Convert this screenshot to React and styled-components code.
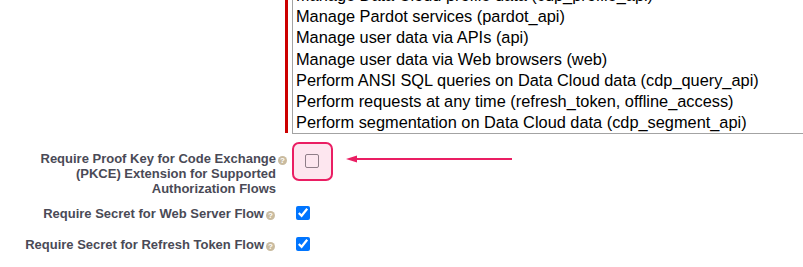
import React from "react";
import styled, { createGlobalStyle } from "styled-components";

const GlobalStyle = createGlobalStyle`
    html, body {
        margin: 0;
        padding: 0;
        background: #fff;
        overflow: hidden;
    }
    body {
        font-family: "Liberation Sans", Arial, sans-serif;
    }
`;

const scopes = [
    "Manage Data Cloud profile data (cdp_profile_api)",
    "Manage Pardot services (pardot_api)",
    "Manage user data via APIs (api)",
    "Manage user data via Web browsers (web)",
    "Perform ANSI SQL queries on Data Cloud data (cdp_query_api)",
    "Perform requests at any time (refresh_token, offline_access)",
    "Perform segmentation on Data Cloud data (cdp_segment_api)",
];

const Page = styled.div`
    width: 803px;
    overflow: hidden;
`;

const Row = styled.div`
    display: flex;
    align-items: ${(p) => p.$align || "flex-start"};
    height: ${(p) => (p.$h ? `${p.$h}px` : "auto")};
    margin-top: ${(p) => p.$top || 0}px;
`;

const LabelCell = styled.div`
    flex: 0 0 ${(p) => p.$width}px;
    box-sizing: border-box;
    padding: ${(p) => p.$padTop || 0}px ${(p) => p.$padRight || 0}px 0 0;
    text-align: right;
    font-size: 13px;
    line-height: 15px;
    font-weight: bold;
    color: #4a4a56;
`;

const HelpOrb = styled.span`
    display: inline-block;
    width: 9px;
    height: 9px;
    margin-left: 2px;
    margin-right: ${(p) => (p.$hang ? "-11px" : "0")};
    border-radius: 50%;
    background: #c9bb9f;
    color: #fff;
    font-size: 8px;
    line-height: 9px;
    text-align: center;
    vertical-align: 0px;
`;

const RequiredInput = styled.div`
    display: flex;
    gap: 4px;
    flex: 1;
`;

const RequiredBar = styled.div`
    flex: 0 0 3px;
    background: #c00;
    margin: 1px 0;
`;

const ListBox = styled.div`
    flex: 0 0 600px;
    border: 1px solid #a3a3a3;
    padding: 0 0 0 3px;
    font-size: 16.35px;
    line-height: 21.2px;
    color: #000;
    white-space: nowrap;
`;

const Option = styled.div``;

const DataCell = styled.div`
    display: flex;
    align-items: flex-start;
`;

const Highlight = styled.div`
    box-sizing: border-box;
    width: 41px;
    height: 39px;
    padding: 10px 0 0 11px;
    border: 2px solid #ea1e63;
    border-radius: 7px;
    background: #fde6ef;
`;

const PlainBox = styled.input.attrs({ type: "checkbox" })`
    appearance: none;
    display: block;
    box-sizing: border-box;
    width: 14px;
    height: 14px;
    margin: 0;
    border: 1px solid #8f7d88;
    border-radius: 2px;
    background: transparent;
`;

const CheckBox = styled.input.attrs({ type: "checkbox" })`
    width: 14px;
    height: 14px;
    margin: 3px 3px 3px 4px;
    accent-color: #0075ff;
`;

const Arrow = styled.svg`
    margin: 12px 0 0 13px;
    flex: 0 0 auto;
`;

const App = () => {
    return (
        <Page>
            <GlobalStyle />
            <Row $top={-16}>
                <LabelCell $width={285} />
                <RequiredInput>
                    <RequiredBar />
                    <ListBox>
                        {scopes.map((s) => (
                            <Option key={s}>{s}</Option>
                        ))}
                    </ListBox>
                </RequiredInput>
            </Row>

            <Row $top={8}>
                <LabelCell $width={292} $padTop={8.5} $padRight={16}>
                    Require Proof Key for Code Exchange
                    <HelpOrb $hang>?</HelpOrb>
                    <br />
                    (PKCE) Extension for Supported
                    <br />
                    Authorization Flows
                </LabelCell>
                <DataCell>
                    <Highlight>
                        <PlainBox />
                    </Highlight>
                    <Arrow width="168" height="10" viewBox="0 0 168 10">
                        <line x1="9" y1="5" x2="166" y2="5" stroke="#ea1e63" strokeWidth="2" />
                        <polygon points="0,5 11,1.5 11,8.5" fill="#ea1e63" />
                    </Arrow>
                </DataCell>
            </Row>

            <Row $top={2} $h={31} $align="center">
                <LabelCell $width={292} $padRight={17}>
                    Require Secret for Web Server Flow
                    <HelpOrb>?</HelpOrb>
                </LabelCell>
                <DataCell>
                    <CheckBox defaultChecked />
                </DataCell>
            </Row>

            <Row $h={31} $align="center">
                <LabelCell $width={292} $padRight={17}>
                    Require Secret for Refresh Token Flow
                    <HelpOrb>?</HelpOrb>
                </LabelCell>
                <DataCell>
                    <CheckBox defaultChecked />
                </DataCell>
            </Row>
        </Page>
    );
};

export default App;
